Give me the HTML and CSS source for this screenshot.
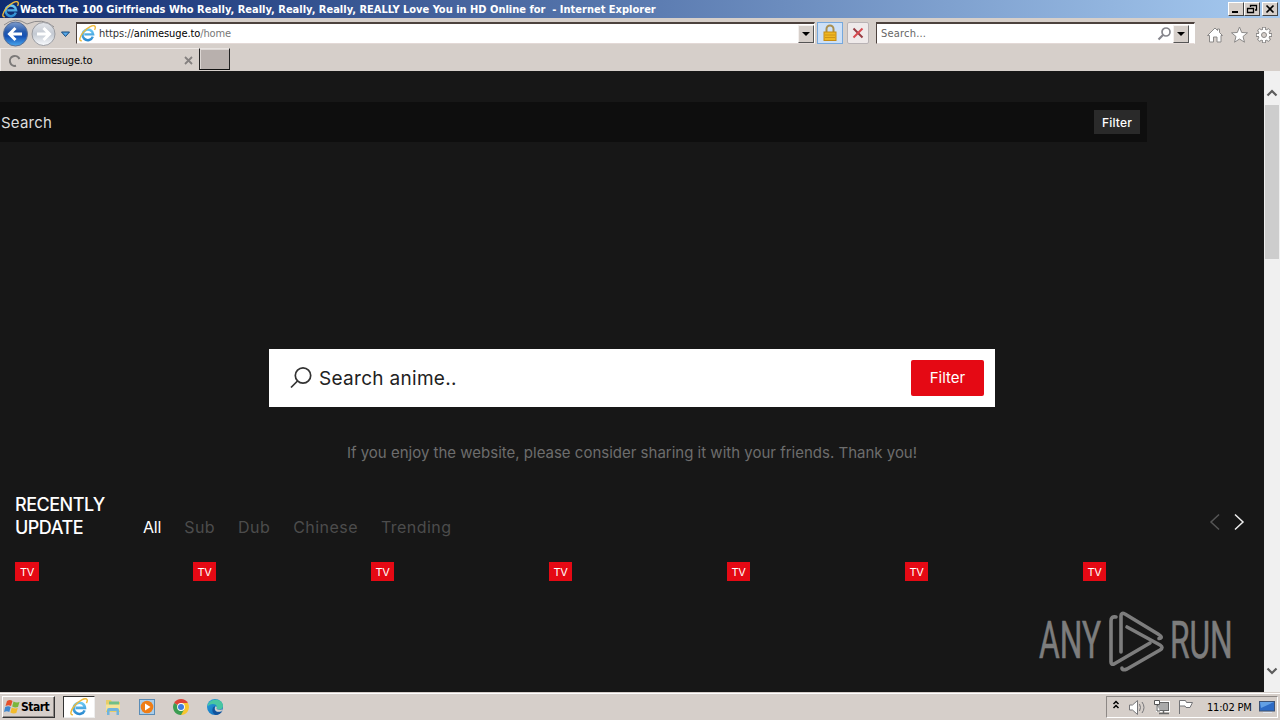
FILE: index.html
```html
<!DOCTYPE html>
<html lang="en">
<head>
  <meta charset="UTF-8">
  <title>Watch The 100 Girlfriends Who Really, Really, Really, Really, REALLY Love You in HD Online for - Internet Explorer</title>
  <link rel="stylesheet" href="styles.css">
</head>
<body>
  <!-- shared icons -->
  <svg class="defs" width="0" height="0">
    <defs>
      <linearGradient id="ieBlue" x1="0" y1="0" x2="0" y2="1">
        <stop offset="0" stop-color="#6cc8f3"/>
        <stop offset="1" stop-color="#2b8ad0"/>
      </linearGradient>
      <linearGradient id="orb" x1="0" y1="0" x2="0" y2="1">
        <stop offset="0" stop-color="#7e9ccc"/>
        <stop offset=".4" stop-color="#2459ad"/>
        <stop offset=".6" stop-color="#1551b5"/>
        <stop offset="1" stop-color="#4aa8ee"/>
      </linearGradient>
      <linearGradient id="orbOff" x1="0" y1="0" x2="0" y2="1">
        <stop offset="0" stop-color="#e4e6ea"/>
        <stop offset=".5" stop-color="#c3c9d2"/>
        <stop offset="1" stop-color="#fafcff"/>
      </linearGradient>
      <linearGradient id="edgeBlue" x1="0" y1="0" x2="1" y2="1">
        <stop offset="0" stop-color="#2aa5dd"/>
        <stop offset="1" stop-color="#0c5eb4"/>
      </linearGradient>
      <symbol id="ie" viewBox="0 0 16 16">
        <path d="M13 11 A5 5 0 1 1 13.300 8.800 H5" fill="none" stroke="url(#ieBlue)" stroke-width="2.300"/>
        <path d="M2.600 14.800 C-.3 15.300 .4 11 4.200 6.700 C8 2.300 13.600-.6 15 1.200 C15.600 2 15.300 3.300 14.600 4.500" fill="none" stroke="#eeb93a" stroke-width="1.300"/>
      </symbol>
    </defs>
  </svg>

  <div class="titlebar">
    <svg class="title-icon" width="17" height="17"><use href="#ie"/></svg>
    <span class="title-text">Watch The 100 Girlfriends Who Really, Really, Really, Really, REALLY Love You in HD Online for &nbsp;- Internet Explorer</span>
    <div class="win-buttons">
      <span class="win-btn"><svg width="12" height="10"><path d="M2 8h6" stroke="#000" stroke-width="2"/></svg></span>
      <span class="win-btn"><svg width="12" height="10"><path d="M4.500 3V1.500h6V6H9M4 1.500h7M1.500 4.500h6v4h-6zM1 4.500h7" fill="none" stroke="#000" stroke-width="1.300"/></svg></span>
      <span class="win-btn close"><svg width="12" height="10"><path d="M2.500 1.500l7 7M9.500 1.500l-7 7" stroke="#000" stroke-width="1.700"/></svg></span>
    </div>
  </div>

  <div class="navbar">
    <svg class="nav-arrows" width="74" height="28" viewBox="0 0 74 28">
      <path d="M4 6 Q15-3 27 5 Q43-2 54 8" fill="none" stroke="#8d8b8c"/>
      <circle cx="15.500" cy="15" r="12" fill="url(#orb)" stroke="#596f96"/>
      <path d="M22 15H10M15.500 9l-6 6 6 6" fill="none" stroke="#fff" stroke-width="3"/>
      <circle cx="43.500" cy="15" r="11.500" fill="url(#orbOff)" stroke="#9c9da2"/>
      <path d="M37 15h12M43.500 9l6 6-6 6" fill="none" stroke="#fff" stroke-width="3"/>
      <path d="M61.500 13h8l-4 4.500z" fill="#55a7e8" stroke="#174a7d"/>
    </svg>
    <div class="address">
      <svg width="17" height="17"><use href="#ie"/></svg>
      <span class="url"><i>https://</i><b>animesuge.to</b>/home</span>
      <span class="drop"></span>
    </div>
    <span class="lock">
      <svg width="16" height="18" viewBox="0 0 16 18">
        <path d="M4.500 8V5a3.500 3.500 0 0 1 7 0v3" fill="none" stroke="#a98f50" stroke-width="2"/>
        <rect x="2" y="8" width="12" height="8.500" fill="#efb722" stroke="#c58b14"/>
        <path d="M3 11h10M3 13.500h10" stroke="#cf9417"/>
      </svg>
    </span>
    <span class="stop">
      <svg width="14" height="14" viewBox="0 0 14 14"><path d="M2.500 2.500L11.500 11.500" stroke="#963c43" stroke-width="2"/><path d="M11.500 2.500L2.500 11.500" stroke="#d94a50" stroke-width="2"/></svg>
    </span>
    <div class="ie-search">
      <span>Search...</span>
      <svg width="16" height="16" viewBox="0 0 16 16"><circle cx="9" cy="6" r="4" fill="none" stroke="#85858c" stroke-width="1.700"/><path d="M6 9l-4.500 4.500" stroke="#85858c" stroke-width="2.200"/></svg>
      <span class="drop"></span>
    </div>
    <svg class="tools" width="72" height="20" viewBox="0 0 72 20" fill="#fff" stroke="#8b8988">
      <path d="M1.500 10.500L9 3l2.500 2.500V4h2v3.500l3 3H15V17h-4v-5H7.500v5H3.500v-6.500z"/>
      <path d="M33.500 2l2.200 5.500 5.800.3-4.500 3.700 1.500 5.700-5-3.200-5 3.200 1.500-5.700-4.500-3.700 5.800-.3z"/>
      <g transform="translate(58 10)">
        <g stroke-width="4">
          <path d="M0-8V8M-8 0H8M-5.700-5.700L5.700 5.700M5.700-5.700L-5.700 5.700"/>
        </g>
        <circle r="5.800"/>
        <g stroke="#fff" stroke-width="2.200">
          <path d="M0-7.200V7.200M-7.200 0H7.200M-5.100-5.100L5.100 5.100M5.100-5.100L-5.100 5.100"/>
        </g>
        <circle r="2.500" fill="#d6cfca"/>
      </g>
    </svg>
  </div>

  <div class="tabbar">
    <div class="tab">
      <svg width="14" height="14" viewBox="0 0 14 14"><path d="M8 11.800A5 5 0 1 1 11.500 5" fill="none" stroke="#7b7978" stroke-width="2"/></svg>
      <span>animesuge.to</span>
      <svg width="9" height="9" viewBox="0 0 9 9"><path d="M1 1l7 7M8 1L1 8" stroke="#858180" stroke-width="1.800"/></svg>
    </div>
    <div class="new-tab"></div>
  </div>

  <div class="viewport">
    <main class="page">
      <div class="top-search">
        <span>Search</span>
        <button>Filter</button>
      </div>

      <div class="search-box">
        <svg width="24" height="24" viewBox="0 0 24 24" fill="none" stroke="#333" stroke-width="1.700"><circle cx="14" cy="9.500" r="7.700"/><path d="M8.500 15L2 21.500"/></svg>
        <span>Search anime..</span>
        <button>Filter</button>
      </div>
      <p class="share">If you enjoy the website, please consider sharing it with your friends. Thank you!</p>

      <section class="recent">
        <h2>RECENTLY UPDATE</h2>
        <ul class="tabs">
          <li class="active">All</li>
          <li>Sub</li>
          <li>Dub</li>
          <li>Chinese</li>
          <li>Trending</li>
        </ul>
        <svg class="pager" width="38" height="18" viewBox="0 0 38 18" fill="none" stroke-width="1.500">
          <path d="M11 1.500L3 9l8 7.500" stroke="#555"/>
          <path d="M27 1.500L35 9l-8 7.500" stroke="#eee"/>
        </svg>
      </section>
      <div class="items">
        <div><span>TV</span></div>
        <div><span>TV</span></div>
        <div><span>TV</span></div>
        <div><span>TV</span></div>
        <div><span>TV</span></div>
        <div><span>TV</span></div>
        <div><span>TV</span></div>
      </div>

      <div class="watermark">
        <span class="any">ANY</span>
        <svg width="56" height="66" viewBox="75 0 56 66" fill="none" stroke="#7d7d7d" stroke-width="3.600" stroke-linejoin="round" stroke-linecap="round">
          <path d="M82 9q-5-1-5 4v41q0 3 3 2l36-21"/>
          <path d="M87 44V8q0-4 4-2l33 20q6 4 1 4.500"/>
          <path d="M93 19l33 18q4 2.500 0 5L93 61q-5 2-5-1"/>
        </svg>
        <span class="run">RUN</span>
      </div>
    </main>
    <div class="scrollbar">
      <svg width="12" height="8" viewBox="0 0 12 8"><path d="M1.500 6.500L6 2l4.500 4.500" fill="none" stroke="#5c5c5c" stroke-width="2.200"/></svg>
      <div class="thumb"></div>
      <svg width="12" height="8" viewBox="0 0 12 8"><path d="M1.500 1.500L6 6l4.500-4.500" fill="none" stroke="#5c5c5c" stroke-width="2.200"/></svg>
    </div>
  </div>

  <div class="taskbar">
    <div class="start">
      <svg width="17" height="16" viewBox="0 0 17 16">
        <path d="M3 2q3-2 5.500 0L7 7Q4.500 5.500 1.500 7z" fill="#e5502b"/>
        <path d="M9.500 2.500q3 1.500 6 .500L14 8q-3 1-5.800-.500z" fill="#7ab63d"/>
        <path d="M1.200 8q3-1.500 5.500 0l-1.400 5Q3 11.500 0 13z" fill="#3f87cf"/>
        <path d="M7.800 8.500q3 1.500 6 .500l-1.500 5q-3 1-5.900-.500z" fill="#f3bb2b"/>
      </svg>
      <span>Start</span>
    </div>
    <div class="quick">
      <span class="open"><svg width="18" height="18"><use href="#ie"/></svg></span>
      <span>
        <svg width="18" height="18" viewBox="0 0 18 18"><path d="M2 2h5l1 2h8v10H2z" fill="#e8cd67"/><path d="M5 3.500h10V7H5z" fill="#6fbf86"/><path d="M2 6.500h14v6H2z" fill="#f5e398"/><path d="M3 17v-5q0-2 2-2h8q2 0 2 2v5h-2.500v-4h-7v4z" fill="#70b4dd"/></svg>
      </span>
      <span>
        <svg width="18" height="18" viewBox="0 0 18 18"><rect x="1.500" y="1.500" width="15" height="15" fill="#a9cdea" stroke="#5a8cb6"/><circle cx="9" cy="9" r="6.300" fill="#ef7d16"/><path d="M7 5.500v7l5.500-3.500z" fill="#fff"/></svg>
      </span>
      <span>
        <svg width="18" height="18" viewBox="0 0 18 18"><path d="M9 9L2.100 5A8 8 0 0 1 15.900 5z" fill="#dd4437"/><path d="M9 9V5h6.900A8 8 0 0 1 9 17z" fill="#f7c62f"/><path d="M9 9l3.400 2L9 17A8 8 0 0 1 2.100 5z" fill="#3c9d52"/><circle cx="9" cy="9" r="3.900" fill="#fff"/><circle cx="9" cy="9" r="3" fill="#3f7de0"/></svg>
      </span>
      <span>
        <svg width="18" height="18" viewBox="0 0 18 18"><circle cx="9" cy="9" r="8" fill="url(#edgeBlue)"/><path d="M2 6C5 0 17 0 17 8c0 4-5 4-6.500 2.500C12 9 10 5.500 6.500 6Q4 6 2 8z" fill="#48c6a2"/><path d="M9 8q-2 5 3 6 3 .3 4.500-1Q14 17 9.500 17 5 14 7 9.500z" fill="#12529b"/><path d="M10 8q1.500 1.500.5 3 2 1.500 6 .3l-1 2q-6 1.700-6.700-2.300Q8.700 9 10 8z" fill="#d6cfca"/></svg>
      </span>
    </div>
    <div class="tray">
      <svg width="82" height="18" viewBox="0 0 82 18">
        <path d="M2.500 6L5 3.500 7.500 6M2.500 10L5 7.500 7.500 10" fill="none" stroke="#000" stroke-width="1.500"/>
        <path d="M18.500 7h3l5-4.500v14l-5-4.500h-3z" fill="#fff" stroke="#77777a"/>
        <path d="M28.500 6q2 3.500 0 7M31 4q4 5.500 0 11" fill="none" stroke="#77777a"/>
        <rect x="46.500" y="4.500" width="11" height="8" fill="#bbb" stroke="#fff" stroke-width="3"/>
        <rect x="46.500" y="4.500" width="11" height="8" fill="#aaa" stroke="#666"/>
        <path d="M48 15.500h10M52.500 13v2" stroke="#666" stroke-width="1.500"/>
        <path d="M43.500 2.500v4h5v-4zM46 7v6h3" fill="#fff" stroke="#555"/>
        <path d="M68.500 16V2.500h6l1 2h6l-2.500 5h-4l-1-1.500h-5.500" fill="#fff" stroke="#747477"/>
      </svg>
      <span class="clock">11:02 PM</span>
      <svg class="desk" width="17" height="14" viewBox="0 0 17 14"><rect x=".5" y="1.500" width="15" height="9.500" fill="#2d6bc5" stroke="#3d5273"/><path d="M1 2h14L2 8z" fill="#62a0e5"/><path d="M4 12.500h9" stroke="#dfe5ef"/></svg>
    </div>
  </div>
</body>
</html>
```

FILE: styles.css
```css
* {
  box-sizing: border-box;
}

body {
  margin: 0;
  width: 1280px;
  height: 720px;
  overflow: hidden;
  display: flex;
  flex-direction: column;
  background: #d6cfca;
  font-family: "DejaVu Sans Condensed", "DejaVu Sans", sans-serif;
  font-stretch: condensed;
  font-size: 11px;
  color: #000;
}

svg {
  display: block;
  flex: none;
}

.defs {
  position: absolute;
}

/* window chrome */
.titlebar {
  height: 18px;
  flex: none;
  display: flex;
  align-items: center;
  padding: 0 2px;
  background: linear-gradient(to right, #0f2b70, #a6caf0);
  color: #fff;
}

.title-text {
  margin-left: 1px;
  font-weight: bold;
  white-space: nowrap;
}

.win-buttons {
  margin-left: auto;
  display: flex;
}

.win-btn {
  width: 16px;
  height: 14px;
  padding: 1px;
  background: #d6cfca;
  border: 1px solid;
  border-color: #fff #444 #444 #fff;
}

.win-btn.close {
  margin-left: 2px;
}

.navbar {
  height: 30px;
  flex: none;
  display: flex;
  align-items: flex-start;
}

.nav-arrows {
  margin-top: 1px;
}

.address,
.ie-search {
  height: 22px;
  display: flex;
  align-items: center;
  background: #fff;
  border: 1px solid;
  border-color: #4d423e #fff #e3d9d6 #4d423e;
  border-top-width: 2px;
}

.address {
  width: 739px;
  margin: 4px 2px 0 2px;
  padding-left: 2px;
}

.url {
  margin-left: 3px;
  color: #777;
  letter-spacing: -0.1px;
}

.url i {
  font-style: normal;
  color: #333;
}

.url b {
  font-weight: normal;
  color: #000;
}

.drop {
  width: 16px;
  height: 18px;
  margin-left: auto;
  display: flex;
  align-items: center;
  justify-content: center;
  background: #d6cfca;
  border: 1px solid;
  border-color: #f4f0ee #555 #555 #f4f0ee;
}

.drop::before {
  content: "";
  border: 4px solid transparent;
  border-top-color: #000;
  border-bottom: 0;
}

.lock {
  width: 26px;
  height: 22px;
  margin: 4px 0 0;
  padding: 1px 4px;
  background: #cde0f7;
  border: 1px solid #76a8dd;
}

.stop {
  width: 22px;
  height: 22px;
  margin: 4px 0 0 4px;
  padding: 3px;
  background: #efeaea;
  border: 1px solid #b9b3b5;
  border-radius: 2px;
}

.ie-search {
  width: 319px;
  margin: 4px 0 0 7px;
  padding: 0 5px 0 4px;
  color: #666;
}

.ie-search span:first-child {
  letter-spacing: 0.2px;
}

.ie-search svg {
  margin-left: auto;
}

.ie-search .drop {
  margin-left: 0;
}

.tools {
  margin: 7px 0 0 11px;
}

.tabbar {
  height: 23px;
  flex: none;
  display: flex;
}

.tab {
  width: 199px;
  display: flex;
  align-items: center;
  padding: 1px 6px 0 7px;
  border-top: 1px solid #eee9e6;
  border-left: 1px solid #eee9e6;
}

.tab span {
  margin: 0 auto 0 5px;
  letter-spacing: -0.2px;
}

.new-tab {
  width: 31px;
  height: 22px;
  background: #b8b0ad;
  border: 1px solid;
  border-color: #e8e3e0 #222 #111 #222;
  box-shadow: inset 1px 1px #ddd7d4;
}

/* web page */
.viewport {
  height: 621px;
  flex: none;
  display: flex;
}

.page {
  position: relative;
  width: 1264px;
  padding-top: 31px;
  background: #171717;
  font-family: Inter, sans-serif;
  font-stretch: normal;
}

.page button {
  border: 0;
  padding: 0;
  color: #fff;
  font-family: inherit;
}

.top-search {
  width: 1147px;
  height: 40px;
  display: flex;
  align-items: center;
  justify-content: space-between;
  padding: 0 7px 0 1px;
  background: #0e0e0e;
  color: #ddd;
  font-size: 15px;
  letter-spacing: 0.2px;
}

.top-search button {
  width: 46px;
  height: 24px;
  background: #2a2a2a;
  font-size: 12px;
  font-weight: 500;
  letter-spacing: 0.2px;
}

.search-box {
  width: 726px;
  height: 58px;
  margin: 207px 0 0 269px;
  display: flex;
  align-items: center;
  padding: 0 11px 1px 20px;
  background: #fff;
  color: #222;
  font-size: 19px;
}

.search-box span {
  margin: 2px auto 0 6px;
  letter-spacing: 0.3px;
}

.search-box button {
  width: 73px;
  height: 36px;
  background: #e50914;
  border-radius: 2px;
  font-size: 15px;
}

.share {
  margin: 36px 0 0;
  text-align: center;
  color: #6d6d6d;
  font-size: 15px;
  line-height: 20px;
}

.recent {
  display: flex;
  align-items: flex-end;
  height: 46px;
  margin: 30px 18px 0 15px;
}

.recent h2 {
  width: 128px;
  margin: 0;
  padding-right: 30px;
  color: #fff;
  font-size: 18px;
  font-weight: 500;
  line-height: 23px;
  letter-spacing: -0.5px;
}

.tabs {
  display: flex;
  gap: 23px;
  margin: 0;
  padding: 0;
  list-style: none;
  color: #4c4c4c;
  font-size: 16px;
  line-height: 23px;
  letter-spacing: 0.45px;
}

.tabs .active {
  color: #fff;
  letter-spacing: -0.2px;
}

.pager {
  margin: 0 0 8px auto;
}

.items {
  display: grid;
  grid-template-columns: repeat(7, 178px);
  margin: 23px 0 0 15px;
}

.items span {
  display: block;
  width: 23px;
  height: 19px;
  background: #e50914;
  color: #fff;
  font-size: 11px;
  line-height: 20px;
  text-align: center;
  letter-spacing: -0.4px;
}

.items div:first-child span {
  width: 24px;
}

/* logo laid over the page corner */
.watermark {
  position: absolute;
  left: 1039px;
  top: 537px;
  display: flex;
  color: #7d7d7d;
  font-family: Roboto, sans-serif;
  font-size: 52px;
  line-height: 66px;
  -webkit-text-stroke: 0.6px #7d7d7d;
}

.watermark span {
  width: 62px;
  transform: scaleX(0.61);
  transform-origin: 0 0;
}

.watermark svg {
  margin: 0 5px 0 8px;
}

.scrollbar {
  width: 16px;
  display: flex;
  flex-direction: column;
  align-items: center;
  padding: 18px 0 17px;
  background: #f0f0f0;
}

.thumb {
  width: 14px;
  height: 154px;
  margin: 8px 0 auto;
  background: #cdcdcd;
}

/* taskbar */
.taskbar {
  height: 28px;
  flex: none;
  display: flex;
  align-items: flex-start;
  border-top: 1px solid #d6cfca;
  box-shadow: inset 0 1px #fff;
}

.start {
  width: 53px;
  height: 22px;
  margin: 3px 0 0 2px;
  display: flex;
  align-items: center;
  padding-left: 1px;
  border: 1px solid;
  border-color: #fff #333 #333 #fff;
  box-shadow: inset -1px -1px #8d8885;
}

.start span {
  font-size: 12px;
  font-weight: bold;
  letter-spacing: -0.5px;
}

.quick {
  display: flex;
  gap: 2px;
  margin: 3px 0 0 8px;
}

.quick > span {
  width: 32px;
  height: 22px;
  padding: 2px 7px;
}

.quick .open {
  padding: 1px 6px;
  background: #fff;
  border: 1px solid;
  border-color: #333 #eee #eee #333;
}

.tray {
  width: 172px;
  height: 22px;
  margin: 3px 2px 0 auto;
  display: flex;
  align-items: center;
  padding-left: 4px;
  border: 1px solid;
  border-color: #8d8885 #fff #fff #8d8885;
}

.clock {
  margin-left: 14px;
  white-space: nowrap;
  letter-spacing: -0.2px;
}

.desk {
  margin: 0 1px 0 auto;
}
```
